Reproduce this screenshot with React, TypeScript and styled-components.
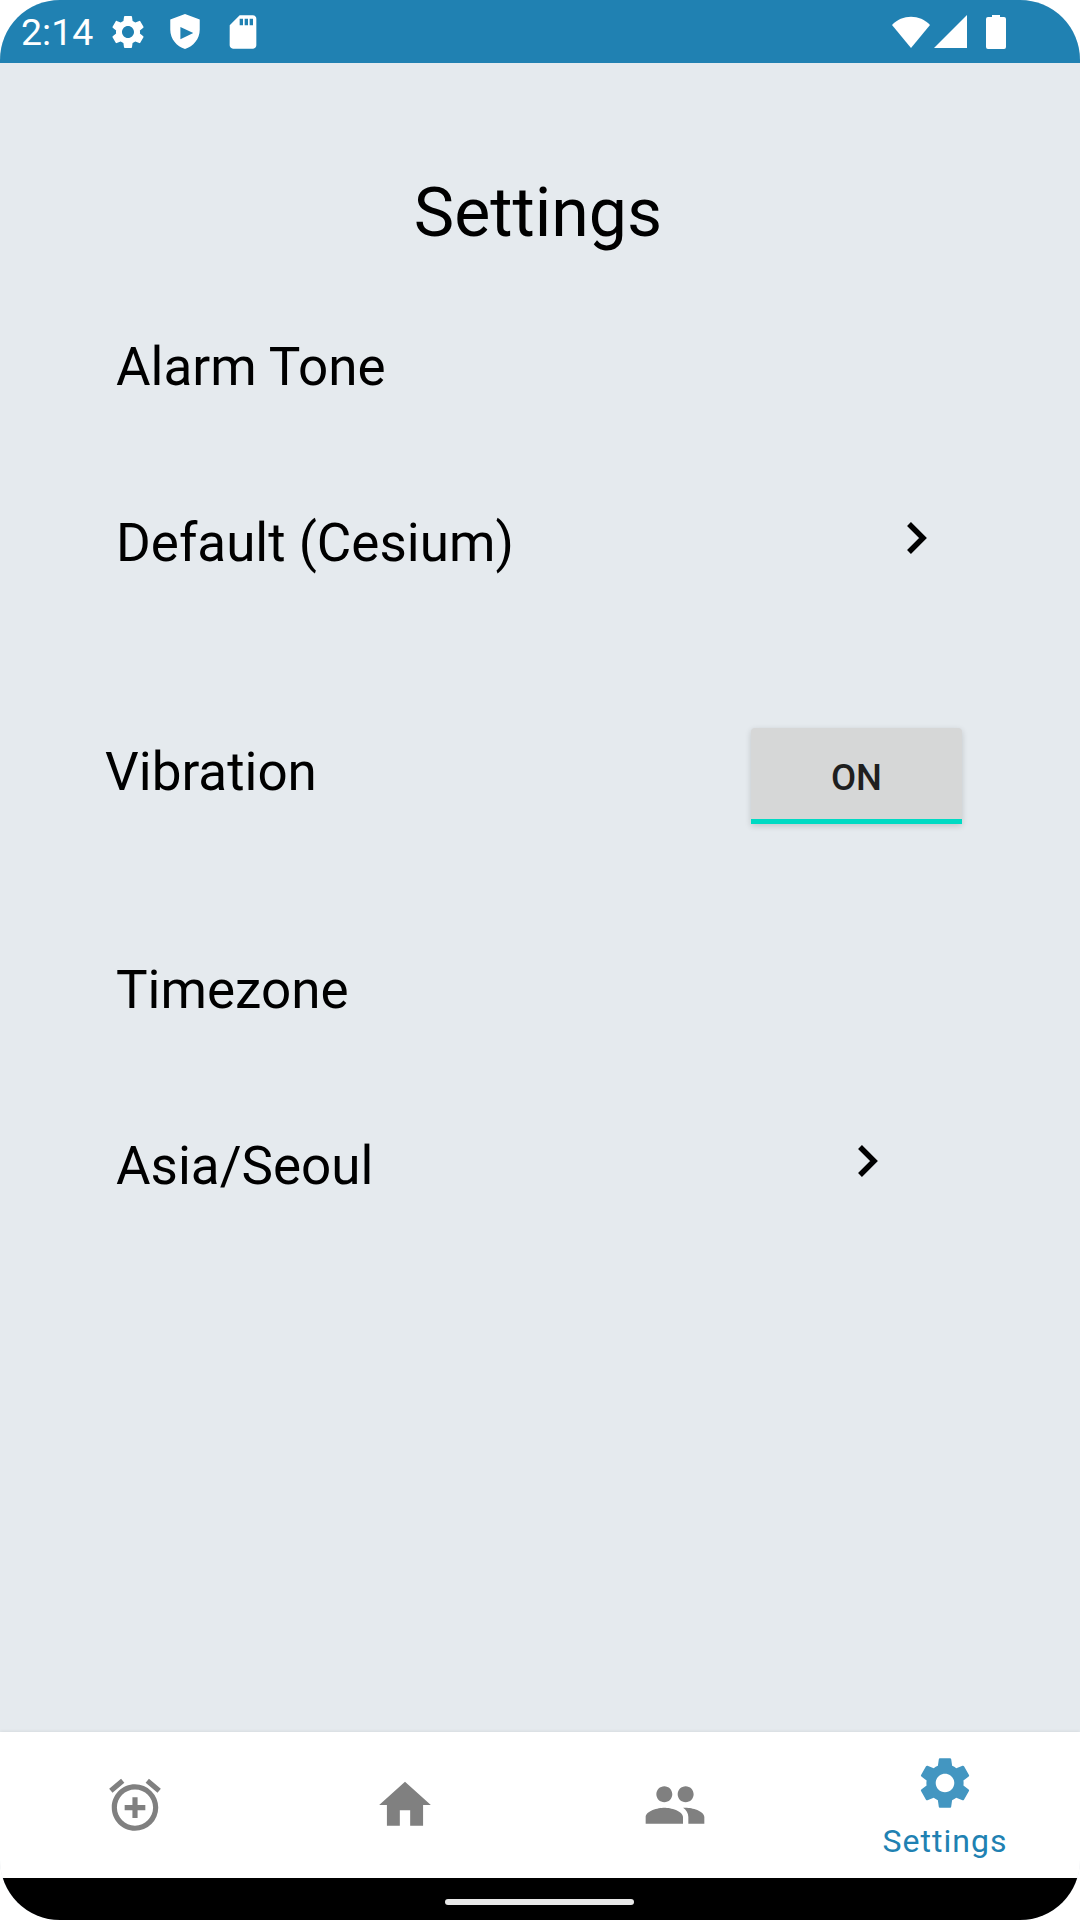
import React, { FunctionComponent } from "react";
import styled, { createGlobalStyle } from "styled-components";
import { MdAddAlarm, MdHome, MdPeople, MdSdCard, MdSettings } from "react-icons/md";

const GlobalStyle = createGlobalStyle`
  html, body {
    margin: 0;
    padding: 0;
    background: #fff;
  }
  body {
    font-family: Roboto, "Liberation Sans", sans-serif;
  }
`;

const Screen = styled.div`
  width: 1080px;
  height: 1920px;
  display: flex;
  flex-direction: column;
  overflow: hidden;
  border-radius: 60px;
  background: #e5eaee;
`;

const StatusBar = styled.div`
  height: 63px;
  flex: none;
  display: flex;
  align-items: center;
  justify-content: space-between;
  padding: 0 74px 0 21px;
  background: #2081b2;
  color: #fff;
`;

const StatusGroup = styled.div`
  display: flex;
  align-items: center;
`;

const Clock = styled.span`
  font-size: 37.5px;
  font-weight: 400;
  width: 87px;
`;

const StatusIcon = styled.svg<{ $left?: number }>`
  display: block;
  fill: #fff;
  margin-left: ${(p) => p.$left ?? 0}px;
`;

const Content = styled.main`
  flex: 1;
  display: flex;
  flex-direction: column;
  color: #000;
`;

const Title = styled.h1`
  margin: 108px 0 0;
  height: 84px;
  font-size: 68px;
  font-weight: 400;
  line-height: 84px;
  text-align: center;
  padding-right: 4px;
`;

const Label = styled.div<{ $top: number }>`
  margin-top: ${(p) => p.$top}px;
  padding-left: 116px;
  font-size: 53px;
  line-height: 58px;
`;

const LinkRow = styled.div<{ $top: number; $right: number }>`
  margin-top: ${(p) => p.$top}px;
  padding: 0 ${(p) => p.$right}px 0 116px;
  display: flex;
  align-items: center;
  justify-content: space-between;
  font-size: 53px;
  line-height: 58px;
`;

const Chevron = styled.svg`
  width: 24px;
  height: 34px;
  margin-top: -10px;
  fill: none;
  stroke: #000;
  stroke-width: 5.5;
`;

const ToggleRow = styled.div`
  margin-top: 148px;
  padding: 0 118px 0 105px;
  display: flex;
  align-items: center;
  justify-content: space-between;
  font-size: 53px;
  line-height: 58px;
`;

const Toggle = styled.button`
  width: 211px;
  height: 96px;
  margin-top: 8px;
  padding: 7px 0 0;
  border: 0;
  border-bottom: 5px solid #00dac3;
  border-radius: 4px 4px 0 0;
  background: #d6d7d7;
  box-shadow: 0 2px 6px rgba(0, 0, 0, 0.16);
  color: #1f1f1f;
  font-family: inherit;
  font-size: 36.5px;
  font-weight: 500;
`;

const TabBar = styled.nav`
  height: 146px;
  flex: none;
  display: grid;
  grid-template-columns: repeat(4, 1fr);
  background: #fff;
  box-shadow: 0 -1px 3px rgba(0, 0, 0, 0.06);
`;

const Tab = styled.div<{ $active?: boolean }>`
  display: flex;
  flex-direction: column;
  align-items: center;
  justify-content: ${(p) => (p.$active ? "flex-start" : "center")};
  padding-top: ${(p) => (p.$active ? 20 : 0)}px;
  color: ${(p) => (p.$active ? "#4396c1" : "#808080")};
  svg {
    display: block;
  }
`;

const TabLabel = styled.span`
  color: #2081b2;
  font-size: 32px;
  line-height: 38px;
  letter-spacing: 1px;
  margin-top: 8px;
`;

const NavBar = styled.div`
  height: 42px;
  flex: none;
  display: flex;
  align-items: center;
  justify-content: center;
  background: #000;
`;

const HomeHandle = styled.div`
  width: 189px;
  height: 6px;
  border-radius: 3px;
  background: #e8e8e8;
  margin: 6px 2px 0 0;
`;

const StatusBarView: FunctionComponent = () => (
  <StatusBar>
    <StatusGroup>
      <Clock>2:14</Clock>
      <MdSettings size={40} style={{ display: "block" }} />
      <StatusIcon $left={22} width="30" height="35" viewBox="2 1 32 38">
        <path
          fillRule="evenodd"
          d="M18 1 L34 7 V18 C34 28 27 36 18 39 C9 36 2 28 2 18 V7 Z M13 15 V28.5 L27 21.7 Z"
        />
      </StatusIcon>
      <MdSdCard size={40} style={{ display: "block", marginLeft: 23 }} />
    </StatusGroup>
    <StatusGroup>
      <StatusIcon width="40" height="34" viewBox="0 0 40 34">
        <path d="M1 10 C11 -1 29 -1 39 10 L20 33 Z" />
      </StatusIcon>
      <StatusIcon $left={3} width="33" height="33" viewBox="0 0 33 33">
        <path d="M0 33 L33 0 V33 Z" />
      </StatusIcon>
      <StatusIcon $left={19} width="20" height="34" viewBox="0 0 20 34">
        <path d="M6 0 H14 V2 H18 A2 2 0 0 1 20 4 V32 A2 2 0 0 1 18 34 H2 A2 2 0 0 1 0 32 V4 A2 2 0 0 1 2 2 H6 Z" />
      </StatusIcon>
    </StatusGroup>
  </StatusBar>
);

const ChevronIcon: FunctionComponent = () => (
  <Chevron viewBox="0 0 24 34">
    <polyline points="4,3 18,17 4,31" />
  </Chevron>
);

const App: FunctionComponent = () => (
  <>
    <GlobalStyle />
    <Screen>
      <StatusBarView />
      <Content>
        <Title>Settings</Title>
        <Label $top={83}>Alarm Tone</Label>
        <LinkRow $top={118} $right={151}>
          Default (Cesium)
          <ChevronIcon />
        </LinkRow>
        <ToggleRow>
          Vibration
          <Toggle>ON</Toggle>
        </ToggleRow>
        <Label $top={137}>Timezone</Label>
        <LinkRow $top={118} $right={200}>
          Asia/Seoul
          <ChevronIcon />
        </LinkRow>
      </Content>
      <TabBar>
        <Tab>
          <MdAddAlarm size={62} />
        </Tab>
        <Tab>
          <MdHome size={62} />
        </Tab>
        <Tab>
          <MdPeople size={64} />
        </Tab>
        <Tab $active>
          <MdSettings size={62} />
          <TabLabel>Settings</TabLabel>
        </Tab>
      </TabBar>
      <NavBar>
        <HomeHandle />
      </NavBar>
    </Screen>
  </>
);

export default App;
